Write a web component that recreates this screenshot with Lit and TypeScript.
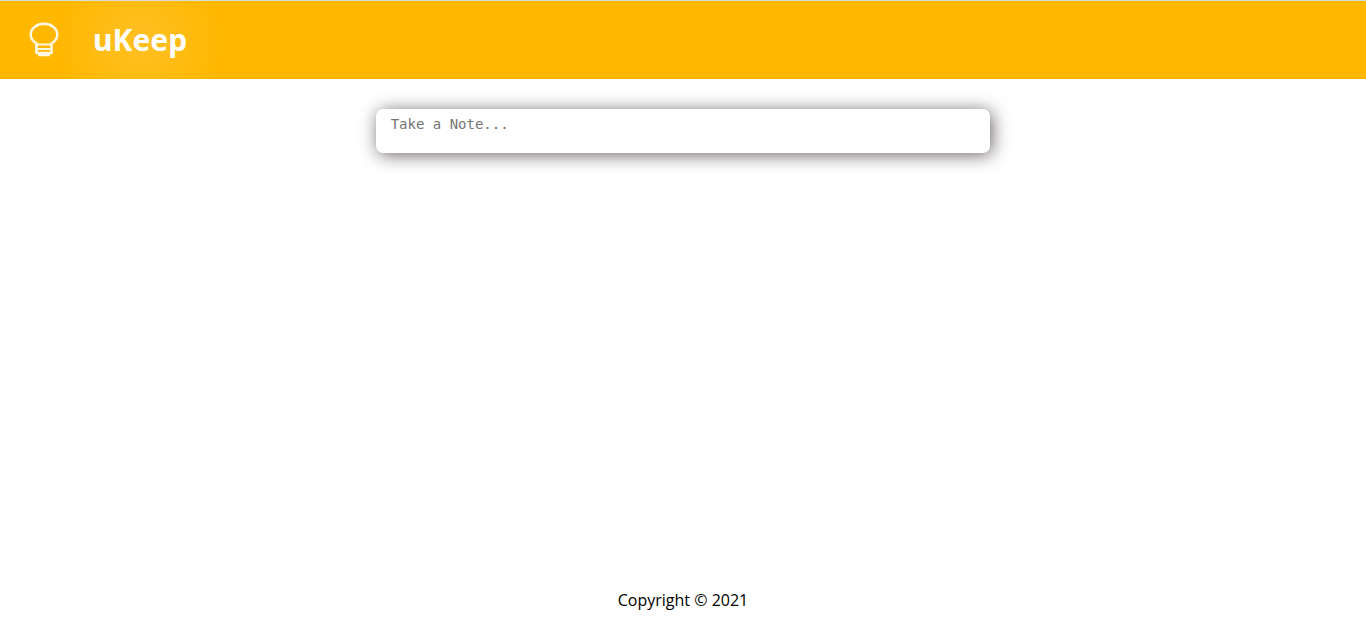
import { LitElement, html, css } from "lit";
import { customElement } from "lit/decorators.js";

@customElement("app-root")
export class AppRoot extends LitElement {
  static styles = css`
    :host {
      display: flex;
      flex-direction: column;
      min-height: 100vh;
      box-sizing: border-box;
      background: #fff;
      color: #000;
      font-family: "Segoe UI", "Noto Sans", "Open Sans", sans-serif;
    }
    .header {
      display: flex;
      align-items: center;
      gap: 34px;
      height: 78px;
      padding: 0 29px;
      border-top: 1px solid #d9dcd8;
      background:
        radial-gradient(circle at 140px 40px, #ffc023 0, #ffb700 84px, transparent 85px),
        #ffb700;
    }
    .logo {
      display: block;
      flex: none;
      width: 30px;
      height: 36px;
    }
    .title {
      margin: 0;
      color: #fff;
      font-size: 30px;
      font-weight: 700;
      line-height: 40px;
    }
    .main {
      flex: 1;
      padding: 30px 0;
    }
    .note {
      display: block;
      box-sizing: border-box;
      width: 45%;
      height: 44px;
      margin: 0 auto;
      padding: 6px 15px;
      border: 0;
      border-radius: 7px;
      outline: none;
      resize: none;
      overflow: hidden;
      background: #fff;
      box-shadow: 2px 2px 18px #6c6464;
      font: 14px/18px "DejaVu Sans Mono", monospace;
    }
    .note::placeholder {
      color: #757575;
      opacity: 1;
    }
    .footer {
      padding-bottom: 12px;
      text-align: center;
      font-family: "Segoe UI", "Open Sans", "Noto Sans", sans-serif;
      font-size: 16px;
      line-height: 26px;
    }
  `;

  render() {
    return html`
      <header class="header">
        <svg class="logo" viewBox="0 0 30 36" fill="none" stroke="#fff8e4" stroke-width="2.5" aria-hidden="true">
          <path d="M7.5 23.5V21.5C4 19.5 1.7 16.5 1.7 12.6C1.7 6.5 7.5 1.8 15 1.8S28.3 6.5 28.3 12.6C28.3 16.5 26 19.5 22.5 21.5V31H7.5Z" stroke-linejoin="round" />
          <path d="M7.5 22.5H22.5M7.5 27H22.5M7.5 22V31" stroke-width="2" />
          <path d="M9 32.5H21" stroke-width="3.5" />
        </svg>
        <h1 class="title">uKeep</h1>
      </header>
      <main class="main">
        <textarea class="note" rows="1" aria-label="Note" placeholder="Take a Note..."></textarea>
      </main>
      <footer class="footer">Copyright © 2021</footer>
    `;
  }
}
